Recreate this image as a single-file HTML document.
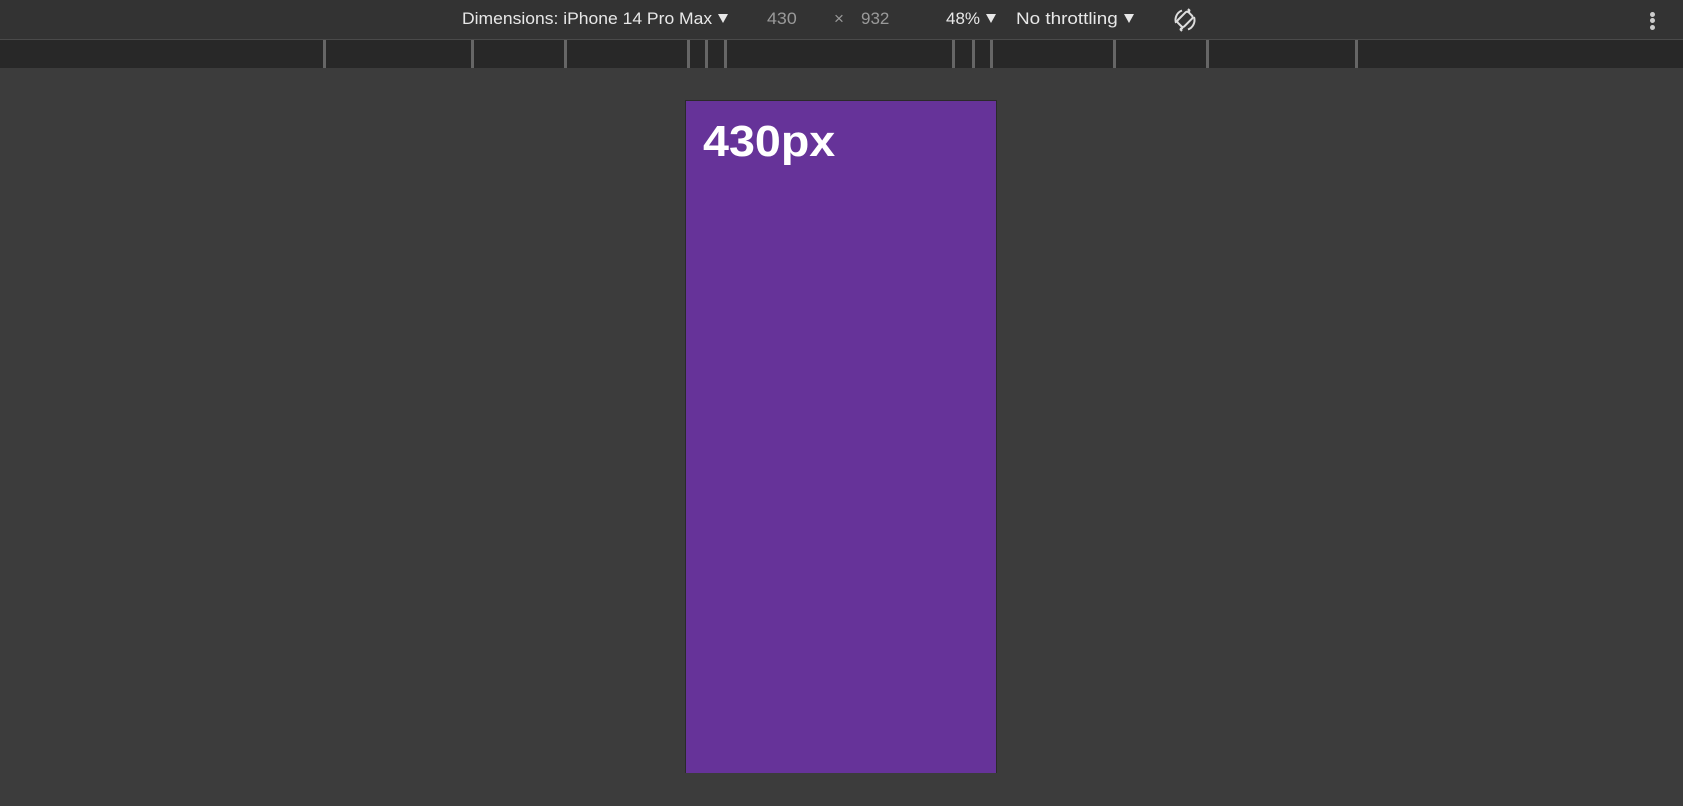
<!DOCTYPE html>
<html><head><style>
body{margin:0;width:1683px;height:806px;background:#3c3c3c;overflow:hidden;font-family:"Liberation Sans",sans-serif;position:relative}
.tb{position:absolute;left:0;top:0;width:1683px;height:39px;background:#333;border-bottom:1px solid #4a4a4a}
.t{position:absolute;top:9px;font-size:17px;color:#e8e8e8;white-space:nowrap;transform-origin:left;}
.g{color:#9a9a9a}
.tri{position:absolute;top:14px;width:0;height:0;border-left:5px solid transparent;border-right:5px solid transparent;border-top:9px solid #e8e8e8}
.rb{position:absolute;left:0;top:40px;width:1683px;height:28px;background:#282828}
.rl{position:absolute;top:40px;width:3px;height:28px;background:#666}
.vp{position:absolute;left:685px;top:100px;width:310px;height:672px;background:#663399;border:1px solid #2a2a2a;border-bottom:none}
.vp h1{margin:0;position:absolute;left:17px;top:16px;font-size:44px;color:#fff;font-weight:bold;transform:scaleX(1.06);transform-origin:left}
.dot{position:absolute;left:1650px;width:5px;height:5px;border-radius:50%;background:#ccc}
</style></head><body>
<div class="tb"></div>
<div class="t" style="left:462px;transform:scaleX(1.03)">Dimensions: iPhone 14 Pro Max</div>
<div class="tri" style="left:718px"></div>
<div class="t g" style="left:767px;transform:scaleX(1.05)">430</div>
<div class="t g" style="left:834px">×</div>
<div class="t g" style="left:861px">932</div>
<div class="t" style="left:946px">48%</div>
<div class="tri" style="left:986px"></div>
<div class="t" style="left:1016px;transform:scaleX(1.11)">No throttling</div>
<div class="tri" style="left:1124px"></div>
<svg style="position:absolute;left:1172px;top:7px" width="26" height="26" viewBox="0 0 26 26" fill="none" stroke="#ddd" stroke-width="2">
<rect x="8" y="5" width="9" height="15" rx="2" transform="rotate(45 13 13)"/>
<path d="M4 16 A10 10 0 0 1 10 3.5"/><path d="M22 10 A10 10 0 0 1 16 22.5"/>
<path d="M8 22 L10 24 M8 22 L11 21"/><path d="M18 4 L16 2 M18 4 L15 5"/>
</svg>
<div class="dot" style="top:12px"></div><div class="dot" style="top:18px"></div><div class="dot" style="top:25px"></div>
<div class="rb"></div>
<div class="rl" style="left:323px"></div><div class="rl" style="left:471px"></div><div class="rl" style="left:564px"></div>
<div class="rl" style="left:687px"></div><div class="rl" style="left:705px"></div><div class="rl" style="left:724px"></div>
<div class="rl" style="left:952px"></div><div class="rl" style="left:972px"></div><div class="rl" style="left:990px"></div>
<div class="rl" style="left:1113px"></div><div class="rl" style="left:1206px"></div><div class="rl" style="left:1355px"></div>
<div class="vp"><h1>430px</h1></div>
</body></html>
